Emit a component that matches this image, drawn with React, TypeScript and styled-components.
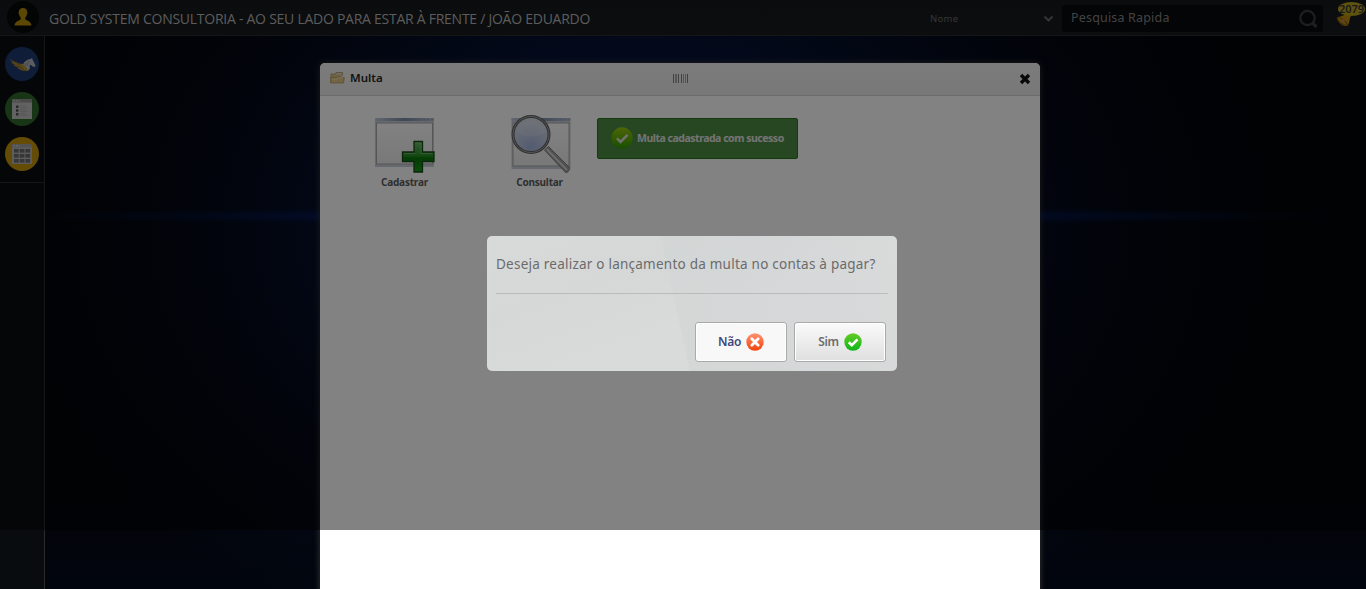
import React from 'react';
import styled, { createGlobalStyle } from 'styled-components';

const Global = createGlobalStyle`
  * { box-sizing: border-box; }
  html, body { margin: 0; padding: 0; overflow: hidden; background: #000; }
  body { font-family: "Noto Sans", "Open Sans", sans-serif; }
  svg { display: block; flex: none; }
`;

const Page = styled.div`
  position: relative;
  display: flex;
  flex-direction: column;
  width: 1366px;
  height: 589px;
  overflow: hidden;
`;

const TopBar = styled.header`
  display: flex;
  align-items: flex-start;
  height: 36px;
  flex: none;
  background: linear-gradient(#15191c, #171b1e);
  border-bottom: 1px solid #2b2b2b;
`;

const Avatar = styled.div`
  display: flex;
  align-items: center;
  justify-content: center;
  width: 32px;
  height: 32px;
  margin: 1px 0 0 7px;
  border-radius: 50%;
  background: #070809;
`;

const Company = styled.h1`
  margin: 8px 0 0 10px;
  width: 881px;
  font: 400 14px/22px "Open Sans", sans-serif;
  letter-spacing: -0.26px;
  color: #b4b4b4;
  white-space: nowrap;
`;

const FilterSelect = styled.div`
  display: flex;
  align-items: center;
  justify-content: space-between;
  width: 124px;
  height: 37px;
  font-size: 9.5px;
  letter-spacing: 0.3px;
  color: #6b6b6b;
`;

const SearchBox = styled.div`
  display: flex;
  align-items: center;
  justify-content: space-between;
  width: 261px;
  height: 27px;
  margin: 5px 0 0 8px;
  padding: 0 5px 0 9px;
  border-radius: 3px;
  background: #080a0c;
  color: #858585;
  font-size: 12.5px;
  letter-spacing: 0.18px;
`;

const SearchLabel = styled.span`
  margin-top: -2px;
`;

const Alerts = styled.div`
  position: relative;
  width: 30px;
  height: 30px;
  margin-left: 13px;
`;

const AlertCount = styled.span`
  position: absolute;
  left: 2px;
  top: 2px;
  width: 27px;
  height: 14px;
  border-radius: 50%;
  background: #b9a31c;
  color: #35353c;
  font-size: 11px;
  font-weight: 600;
  line-height: 14px;
  text-align: center;
`;

const Body = styled.div`
  display: flex;
  flex: 1;
  min-height: 0;
`;

const Sidebar = styled.nav`
  width: 45px;
  flex: none;
  border-right: 1px solid #2b2b2b;
  background: #080c0e;
`;

const Shortcuts = styled.div`
  display: flex;
  flex-direction: column;
  align-items: center;
  gap: 11px;
  height: 147px;
  padding-top: 11px;
  border-bottom: 1px solid #2b2b2b;
`;

const Shortcut = styled.div<{ $color: string }>`
  display: flex;
  align-items: center;
  justify-content: center;
  width: 34px;
  height: 34px;
  border-radius: 50%;
  background: ${(p) => p.$color};
`;

const Desktop = styled.main`
  flex: 1;
  padding: 27px 0 0 275px;
  background:
    radial-gradient(ellipse 660px 9px at 635px 180px, rgba(8, 55, 170, 0.8), rgba(5, 35, 120, 0.35) 60%, transparent),
    radial-gradient(ellipse 640px 460px at 595px 190px, #0a2058 0%, rgba(7, 24, 68, 0.8) 35%, rgba(4, 14, 40, 0.45) 68%, transparent 100%),
    linear-gradient(#030408 80%, #01050d);
`;

const Window = styled.section`
  width: 720px;
  height: 540px;
  border-radius: 5px 5px 0 0;
  background: #fff;
  box-shadow: 0 0 6px #3a3a3a;
`;

const WindowHeader = styled.header`
  display: grid;
  grid-template-columns: 1fr 16px 1fr;
  align-items: center;
  height: 33px;
  padding: 0 9px 3px 10px;
  border-bottom: 1px solid #d2d2d2;
  border-radius: 5px 5px 0 0;
  background: linear-gradient(#f2f2f2, #ececec);
`;

const WindowTitle = styled.h2`
  display: flex;
  align-items: center;
  gap: 5px;
  margin: 0;
  color: #262626;
  font-size: 11.5px;
  font-weight: 600;
`;

const Grip = styled.div`
  margin-top: 1px;
`;

const CloseButton = styled.div`
  justify-self: end;
  margin-top: 3px;
`;

const WindowBody = styled.div`
  display: flex;
  align-items: flex-start;
  padding: 19px 0 0 17px;
`;

const Action = styled.div`
  display: flex;
  flex-direction: column;
  align-items: center;
  width: 135px;
  color: #5c5c5c;
  font-size: 10px;
  font-weight: 700;
  letter-spacing: -0.2px;
  line-height: 14px;
`;

const SuccessMessage = styled.div`
  display: flex;
  align-items: center;
  gap: 4px;
  width: 201px;
  height: 41px;
  margin: 3px 0 0 -10px;
  padding: 0 0 1px 13px;
  border: 1px solid #2c7320;
  border-radius: 2px;
  background: #4d8b46;
  color: #e4e4e4;
  font-size: 10.5px;
  font-weight: 700;
  letter-spacing: -0.48px;
  white-space: nowrap;
`;

const Shade = styled.div`
  position: absolute;
  inset: 0 0 auto 0;
  height: 530px;
  padding: 236px 0 0 487px;
  background: rgba(0, 0, 0, 0.49);
`;

const Dialog = styled.div`
  width: 410px;
  height: 135px;
  padding: 16px 9px 0;
  border-radius: 5px;
  background:
    linear-gradient(78deg, transparent 46%, rgba(206, 210, 210, 0.35) 46.4%, rgba(208, 211, 214, 0.35) 75%, transparent 100%),
    linear-gradient(160deg, rgba(217, 218, 218, 0.5), rgba(210, 214, 213, 0.5) 30%, transparent 55%),
    #d9dada;
`;

const Question = styled.p`
  margin: 0;
  height: 42px;
  border-bottom: 1px solid #b9bcbc;
  color: #6b6b6b;
  font-size: 13.5px;
  letter-spacing: 0.235px;
  line-height: 24px;
  white-space: nowrap;
`;

const DialogActions = styled.div`
  display: flex;
  justify-content: flex-end;
  gap: 7px;
  padding: 28px 2px 0 0;
`;

const DialogButton = styled.button<{ $active?: boolean }>`
  display: flex;
  align-items: center;
  justify-content: center;
  gap: 5px;
  width: 92px;
  height: 40px;
  padding: 0;
  border: 1px solid #aaa;
  border-radius: 3px;
  box-shadow: inset 0 0 0 1px #fff;
  background: ${(p) => (p.$active ? '#f8f8f8' : 'linear-gradient(#fafafa, #dfdfdf)')};
  color: ${(p) => (p.$active ? '#3f477e' : '#6c6c6c')};
  font: 600 12px/16px "Noto Sans", sans-serif;
  letter-spacing: -0.3px;
`;

const ButtonLabel = styled.span`
  margin-top: -1px;
`;

const UserIcon = () => (
  <svg width="20" height="20" viewBox="0 0 20 20">
    <path d="M10 1c-2.7 0-4.3 1.8-4.2 4.2-.4.2-.3 1.5.3 2 .2 1.5.8 2.5 1.6 3.2v1.8C6.8 13.6 2 13.8 1.500 18.500h17C18 13.800 13.200 13.600 12.300 12.200v-1.800c.8-.7 1.400-1.700 1.600-3.200.6-.5.7-1.800.3-2C14.300 2.800 12.700 1 10 1z" fill="#b58b08" />
  </svg>
);

const PegasusIcon = () => (
  <svg width="28" height="18" viewBox="0 0 28 18">
    <path d="M1 4l10 4.500 4 .5 3 2 3 4-1 1-6-.5-5-2.500 2 .1-6-3 2 .1-4-3h2z" fill="#b08f34" />
    <path d="M3 5.500l10 5M5 8.500l9 4M9 11.500l7 3" stroke="#756228" strokeWidth=".6" />
    <path d="M15 9.500c1-3 4.500-5.500 8-5.500l1-1.500.5 2c1 1.500 2 4 3 6l-.8 1.500-1.700-.2-2.500-2c-1.500 1-.5 2.500-.5 4l-2.500 1.500c-.2-2-2-4-4.500-5.800z" fill="#b0b4bc" />
    <path d="M18 8l-1 2.500M21 6l-2 5" stroke="#777d88" strokeWidth=".7" />
  </svg>
);

const ListIcon = () => (
  <svg width="20" height="20" viewBox="0 0 20 20">
    <path fill="#c0c0c0" d="M0 0h20v20H0z" />
    <path fill="#929292" d="M0 0h20v3.500H0z" />
    <path fill="#bcbcbc" d="M1 1h2v1.500H1zM4 1h2v1.500H4zM7 1h1v1.500H7z" />
    <path fill="#505050" d="M4 6.500h2.500V9H4zM4 10.300h2.500v2.500H4zM4 14.100h2.500v2.500H4z" />
    <path fill="#acacac" d="M8 6.500h6v1H8zM8 8.200h8v1H8zM8 10.300h6v1H8zM8 12h8v1H8zM8 14.100h6v1H8zM8 15.800h8v1H8z" />
  </svg>
);

const TableIcon = () => (
  <svg width="20" height="20" viewBox="0 0 20 20">
    <path fill="#b4b4b4" d="M0 0h20v20H0z" />
    <path fill="#a2a2a2" d="M0 0h20v3.500H0z" />
    <path fill="#c0c0c0" d="M1 1h2v1.500H1zM4 1h2v1.500H4zM7 1h1v1.500H7z" />
    {[5, 10, 15].map((y) => [2, 7.7, 13.4].map((x) => (
      <rect key={`${x}-${y}`} x={x} y={y} width="4.700" height="3.600" fill="#6c6c6c" />
    )))}
  </svg>
);

const BellIcon = () => (
  <svg width="30" height="30" viewBox="0 0 30 30">
    <path d="M1 17.500c3-1.500 5-1 9-3.500l5 2c-2 3-1 5-2.500 8l-1 2c-5 .5-9.500-3-10.500-8.500z" fill="#bd8b10" />
    <path d="M1.500 17.500c4 0 9 4 10.500 8M2 20c2 3 5 5 9 5.500" fill="none" stroke="#7d5411" strokeWidth="1.200" />
    <circle cx="7" cy="21" r="1.700" fill="#b78a55" />
  </svg>
);

const FolderIcon = () => (
  <svg width="15" height="13" viewBox="0 0 15 13">
    <path d="M1 11.500V3h4l1-1.500h6.500v3" fill="#d8c08a" stroke="#b39a62" strokeWidth=".8" />
    <path d="M7 2h4l1 1.500H6z" fill="#d4dadd" />
    <path d="M.7 12V6.500h6L8 5.500l6.300 1-.8 5.500z" fill="#dfc68a" stroke="#b08f4d" strokeWidth=".7" />
    <path d="M2 8h5l1-1.300h5" stroke="#f5e4b0" fill="none" strokeWidth=".8" />
  </svg>
);

const GripIcon = () => (
  <svg width="16" height="9" viewBox="0 0 16 9">
    <path d="M0 0h1v9H0zM5 0h1v9H5zM8 0h1v9H8zM14 0h1v9H14z" fill="#808080" />
    <path d="M2 0h2v9H2zM10 0h1v9H10zM12 0h1v9H12z" fill="#a8a8a8" />
  </svg>
);

const Pane = ({ x, y, h }: { x: number; y: number; h: number }) => (
  <g>
    <rect x={x} y={y} width="59" height={h} fill="#c9ced6" />
    <rect x={x} y={y} width="59" height="3" fill="url(#paneBar)" />
    <path d={`M${x + 48} ${y + 1.5}h2m2 0h2m2 0h2`} stroke="#94a2b8" strokeWidth="1.300" />
    <rect x={x + 1.5} y={y + 5} width="56" height={h - 8} fill="url(#paneFill)" stroke="#aaa" strokeWidth="1" />
  </g>
);

const Defs = () => (
  <defs>
    <linearGradient id="paneBar"><stop stopColor="#c1cad8" /><stop offset=".5" stopColor="#7c8ca8" /><stop offset="1" stopColor="#b7c2d4" /></linearGradient>
    <linearGradient id="paneFill" x2="0" y2="1"><stop stopColor="#fff" /><stop offset="1" stopColor="#ececec" /></linearGradient>
    <linearGradient id="plusFill" x2="0" y2="1"><stop stopColor="#6cb86c" /><stop offset=".45" stopColor="#2c922c" /><stop offset=".55" stopColor="#0b750b" /><stop offset="1" stopColor="#159a15" /></linearGradient>
    <radialGradient id="lensFill" cx=".5" cy=".85" r=".75"><stop stopColor="#a5b3dc" /><stop offset="1" stopColor="#d5dde8" /></radialGradient>
    <linearGradient id="handle" x1="0" y1="1" x2="1" y2="0"><stop stopColor="#777" /><stop offset=".5" stopColor="#ddd" /><stop offset="1" stopColor="#888" /></linearGradient>
  </defs>
);

const RegisterIcon = () => (
  <svg width="62" height="60" viewBox="0 0 62 60">
    <Defs />
    <Pane x={1} y={3} h={49} />
    <path d="M40 26.500h8.500V37H60v9.500H48.500V57H40V46.500H28.500V37H40z" fill="url(#plusFill)" stroke="#174c17" strokeWidth="1.300" />
    <path d="M41.500 28h5.500v10.500h11.500M30 38.500h11.500" stroke="#a7dda7" strokeOpacity=".4" fill="none" />
  </svg>
);

const SearchRecordIcon = () => (
  <svg width="62" height="60" viewBox="-1.500 0 62 60">
    <Pane x={1} y={3} h={51} />
    <path d="M34 35l4-3.500 21 21c.5 3-2 5.500-4 5z" fill="#a0a0a0" stroke="#707070" strokeWidth=".8" />
    <path d="M36 34l20.500 21" stroke="#dedede" strokeWidth="1.600" />
    <circle cx="20.500" cy="19.500" r="18" fill="url(#lensFill)" stroke="#5e5e5e" strokeWidth="3" />
    <circle cx="20.500" cy="19.500" r="18" fill="none" stroke="#a8a8a8" strokeWidth="1" />
    <path d="M6 17a15 15 0 0 1 29 0c-7 6-22 6-29 0z" fill="#fff" opacity=".15" />
  </svg>
);

const StatusIcon = ({ size, ok, muted }: { size: number; ok?: boolean; muted?: boolean }) => {
  const id = `status-${size}-${ok ? 'ok' : 'no'}`;
  const top = ok ? (muted ? '#98c810' : '#65cc22') : '#ff9270';
  const bottom = ok ? (muted ? '#2f9c00' : '#0eb51b') : '#f1430b';
  return (
    <svg width={size} height={size} viewBox="0 0 18 18">
      <defs><linearGradient id={id} x2="0" y2="1"><stop stopColor={top} /><stop offset="1" stopColor={bottom} /></linearGradient></defs>
      <circle cx="9" cy="9" r="8.700" fill={`url(#${id})`} />
      <path d={ok ? 'M4.800 9.200l3 3 5.700-5.800' : 'M5.800 5.800l6.400 6.400m0-6.400l-6.400 6.400'} fill="none" stroke={muted ? '#dedede' : '#fff'} strokeWidth={ok ? (muted ? 2 : 2.700) : 2.800} strokeLinecap={ok ? 'butt' : 'round'} />
    </svg>
  );
};

export default function App() {
  return (
    <>
      <Global />
      <Page>
        <TopBar>
          <Avatar><UserIcon /></Avatar>
          <Company>GOLD SYSTEM CONSULTORIA - AO SEU LADO PARA ESTAR À FRENTE / JOÃO EDUARDO</Company>
          <FilterSelect>
            <span>Nome</span>
            <svg width="11" height="8" viewBox="0 0 11 8"><path d="M1.500 1.500l4 4 4-4" fill="none" stroke="#666" strokeWidth="2" /></svg>
          </FilterSelect>
          <SearchBox>
            <SearchLabel>Pesquisa Rapida</SearchLabel>
            <svg width="19" height="20" viewBox="0 0 19 20"><circle cx="8.500" cy="9" r="7.200" fill="none" stroke="#3b3d3f" strokeWidth="2.200" /><path d="M13.500 14l4 4" stroke="#3b3d3f" strokeWidth="3.200" /></svg>
          </SearchBox>
          <Alerts><BellIcon /><AlertCount>2079</AlertCount></Alerts>
        </TopBar>
        <Body>
          <Sidebar>
            <Shortcuts>
              <Shortcut $color="#1e3a70"><PegasusIcon /></Shortcut>
              <Shortcut $color="#30682a"><ListIcon /></Shortcut>
              <Shortcut $color="#c4960d"><TableIcon /></Shortcut>
            </Shortcuts>
          </Sidebar>
          <Desktop>
            <Window>
              <WindowHeader>
                <WindowTitle><FolderIcon />Multa</WindowTitle>
                <Grip><GripIcon /></Grip>
                <CloseButton>
                  <svg width="12" height="12" viewBox="0 0 12 12"><path d="M2 2l8 8m0-8l-8 8" stroke="#111" strokeWidth="3.400" /></svg>
                </CloseButton>
              </WindowHeader>
              <WindowBody>
                <Action><RegisterIcon />Cadastrar</Action>
                <Action><SearchRecordIcon />Consultar</Action>
                <SuccessMessage><StatusIcon size={22} ok muted />Multa cadastrada com sucesso</SuccessMessage>
              </WindowBody>
            </Window>
          </Desktop>
        </Body>
        <Shade>
          <Dialog>
            <Question>Deseja realizar o lançamento da multa no contas à pagar?</Question>
            <DialogActions>
              <DialogButton $active><ButtonLabel>Não</ButtonLabel><StatusIcon size={18} /></DialogButton>
              <DialogButton><ButtonLabel>Sim</ButtonLabel><StatusIcon size={18} ok /></DialogButton>
            </DialogActions>
          </Dialog>
        </Shade>
      </Page>
    </>
  );
}
